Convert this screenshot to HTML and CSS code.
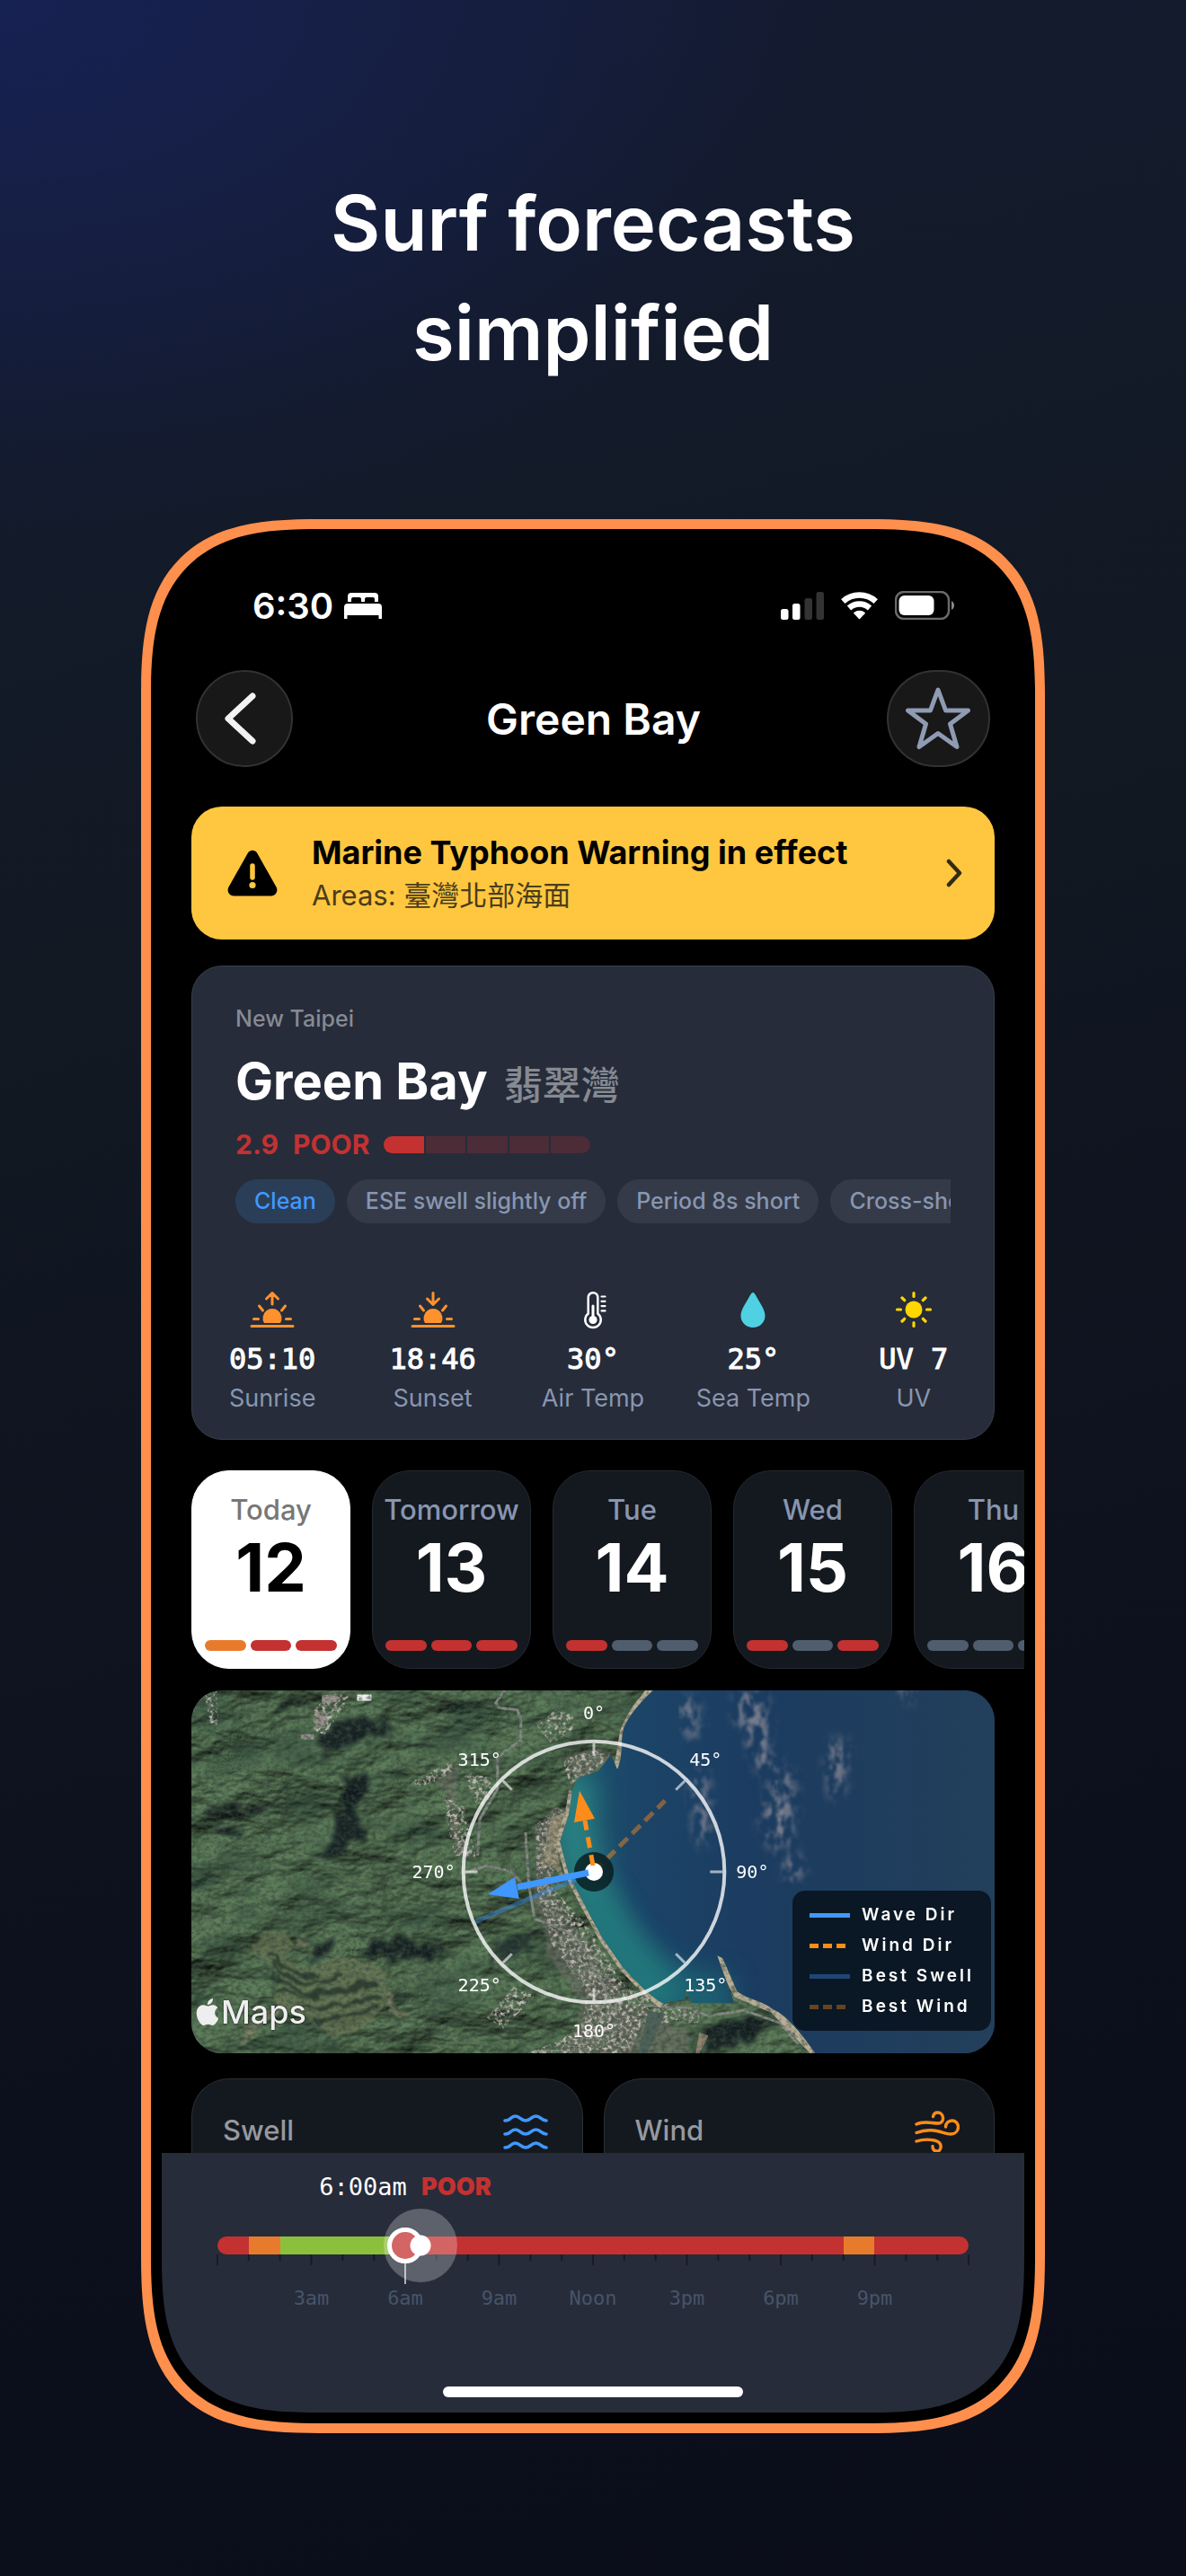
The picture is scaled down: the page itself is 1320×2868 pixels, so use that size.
FILE: index.html
```html
<!DOCTYPE html>
<html lang="en">
<head>
    <meta charset="UTF-8">
    <meta name="viewport" content="width=device-width, initial-scale=1.0">
    <title>Surf forecasts simplified</title>
    <link rel="stylesheet" href="styles.css">
</head>
<body>
    <h1 class="headline">Surf forecasts<br>simplified</h1>

    <div class="phone">
        <div class="screen">
            <!-- Status bar -->
            <div class="status-bar">
                <div class="status-left">
                    <span>6:30</span>
                    <svg width="42" height="29" viewBox="0 0 42 29" fill="#fff">
                        <path d="M4 10V4a4 4 0 0 1 4-4h26a4 4 0 0 1 4 4v6h-4V7a2 2 0 0 0-2-2h-7a2 2 0 0 0-2 2v3h-4V7a2 2 0 0 0-2-2h-7a2 2 0 0 0-2 2v3z"/>
                        <path d="M0 28V16a4 4 0 0 1 4-4h34a4 4 0 0 1 4 4v12a1.500 1.500 0 0 1-3.500 0v-3h-35v3A1.500 1.500 0 0 1 0 28z"/>
                    </svg>
                </div>
                <div class="status-right">
                    <svg width="48" height="31" viewBox="0 0 48 31" fill="#fff">
                        <rect x="0" y="19" width="8.500" height="12" rx="2.500"/>
                        <rect x="13" y="13" width="8.500" height="18" rx="2.500"/>
                        <rect x="26.500" y="7" width="8.500" height="24" rx="2.500" fill="#333"/>
                        <rect x="39.500" y="0" width="8.500" height="31" rx="2.500" fill="#333"/>
                    </svg>
                    <svg width="41" height="31" viewBox="0 0 41 31" fill="none" stroke="#fff" stroke-width="6.500">
                        <path d="M2.300 10.600A27.200 27.200 0 0 1 38.700 10.600M9 18A17.300 17.300 0 0 1 32 18"/>
                        <path d="M14.800 23.500a9 9 0 0 1 11.400 0l-5.700 6z" fill="#fff" stroke-width="1.500" stroke-linejoin="round"/>
                    </svg>
                    <svg width="66" height="32" viewBox="0 0 66 32">
                        <rect x="1" y="1" width="59" height="30" rx="9" fill="none" stroke="#6b6b6b" stroke-width="2.500"/>
                        <rect x="4.500" y="5" width="39" height="22" rx="6" fill="#fff"/>
                        <path d="M63 11c4 2 4 8 0 10z" fill="#8a8a8a"/>
                    </svg>
                </div>
            </div>

            <!-- Navigation -->
            <header class="nav">
                <button class="nav-button" aria-label="Back">
                    <svg width="46" height="62" viewBox="0 0 46 62" fill="none" stroke="#f2f2f2" stroke-width="7" stroke-linecap="round" stroke-linejoin="round">
                        <path d="M32 6L5 31l27 25"/>
                    </svg>
                </button>
                <h2 class="nav-title">Green Bay</h2>
                <button class="nav-button nav-button-wide" aria-label="Favourite">
                    <svg width="74" height="72" viewBox="0 0 74 72" fill="none" stroke="#8e9bb3" stroke-width="5" stroke-linejoin="round">
                        <path d="M37 4L45.500 27H70.500L50.500 42L58 67.500L37 52.500L16 67.500L23.500 42L3.500 27H28.500Z"/>
                    </svg>
                </button>
            </header>

            <main class="content">
                <a class="warning" href="#">
                    <svg width="56" height="52" viewBox="0 0 56 52">
                        <path d="M23 3.500c2.200-3.800 7.800-3.800 10 0l21.500 38c2.400 4.300-.4 10-5.500 10H7c-5.100 0-7.900-5.700-5.500-10z" fill="#000"/>
                        <path d="M28 18v13" stroke="#ffc73f" stroke-width="5.500" stroke-linecap="round"/>
                        <circle cx="28" cy="39.500" r="3.600" fill="#ffc73f"/>
                    </svg>
                    <span class="warning-text">
                        <strong>Marine Typhoon Warning in effect</strong>
                        <span>Areas: 臺灣北部海面</span>
                    </span>
                    <svg width="18" height="32" viewBox="0 0 18 32" fill="none" stroke="#332b14" stroke-width="4.500" stroke-linecap="round" stroke-linejoin="round">
                        <path d="M3 3l12 13L3 29"/>
                    </svg>
                </a>

                <section class="hero">
                    <div class="hero-top">
                        <p class="region">New Taipei</p>
                        <div class="spot">
                            <h3>Green Bay</h3>
                            <span>翡翠灣</span>
                        </div>
                        <div class="rating">
                            <span>2.9</span>
                            <span>POOR</span>
                            <div class="rating-bar">
                                <i class="on"></i><i></i><i></i><i></i><i></i>
                            </div>
                        </div>
                        <div class="chips">
                            <span class="chip chip-blue">Clean</span>
                            <span class="chip">ESE swell slightly off</span>
                            <span class="chip">Period 8s short</span>
                            <span class="chip">Cross-shore</span>
                        </div>
                    </div>
                    <div class="stats">
                        <div class="stat">
                            <svg width="50" height="48" viewBox="0 0 50 48" fill="none" stroke="#ff922e" stroke-width="3" stroke-linecap="round" stroke-linejoin="round">
                                <path d="M2 42.500h46M4.500 34.500h5M40.500 34.500h5M10.500 20l4 5M39.500 20l-4 5M25 18V6M18.500 12L25 5.500l6.500 6.500"/>
                                <path d="M16 39a10.500 10.500 0 1 1 18 0z" fill="#ff922e" stroke="none"/>
                            </svg>
                            <b>05:10</b>
                            <span>Sunrise</span>
                        </div>
                        <div class="stat">
                            <svg width="50" height="48" viewBox="0 0 50 48" fill="none" stroke="#ff922e" stroke-width="3" stroke-linecap="round" stroke-linejoin="round">
                                <path d="M2 42.500h46M4.500 34.500h5M40.500 34.500h5M10.500 20l4 5M39.500 20l-4 5M25 5.500V17.500M18.500 12l6.500 6.500 6.500-6.500"/>
                                <path d="M16 39a10.500 10.500 0 1 1 18 0z" fill="#ff922e" stroke="none"/>
                            </svg>
                            <b>18:46</b>
                            <span>Sunset</span>
                        </div>
                        <div class="stat">
                            <svg width="50" height="48" viewBox="0 0 50 48" fill="none" stroke="#fff" stroke-width="2.500" stroke-linecap="round">
                                <path d="M19.700 28.500V10.500a5.300 5.300 0 0 1 10.600 0v18a8.700 8.700 0 1 1-10.600 0z"/>
                                <path d="M25 20v14" stroke-width="3"/>
                                <circle cx="25" cy="35.500" r="4.600" fill="#fff" stroke="none"/>
                                <path d="M34.500 9.500h4M34.500 14.800h4M34.500 20.100h4M34.500 25.400h4" stroke-width="2.200"/>
                            </svg>
                            <b>30°</b>
                            <span>Air Temp</span>
                        </div>
                        <div class="stat">
                            <svg width="50" height="48" viewBox="0 0 50 48">
                                <path d="M25 5c1 0 2 1 3 3 5 9 10.500 16 10.500 23A13.500 13 0 0 1 25 44a13.500 13 0 0 1-13.500-13C11.500 24 17 17 22 8c1-2 2-3 3-3z" fill="#4fd0e3"/>
                            </svg>
                            <b>25°</b>
                            <span>Sea Temp</span>
                        </div>
                        <div class="stat">
                            <svg width="50" height="48" viewBox="0 0 50 48" fill="#ffd600" stroke="#ffd600" stroke-width="3.200" stroke-linecap="round">
                                <circle cx="25" cy="24" r="9.500" stroke="none"/>
                                <path d="M25 5.500v4M25 38.500v4M6.500 24h4M39.500 24h4M12 11l2.700 2.700M35.300 34.300L38 37M12 37l2.700-2.700M35.300 13.700L38 11"/>
                            </svg>
                            <b>UV 7</b>
                            <span>UV</span>
                        </div>
                    </div>
                </section>
            </main>

            <!-- Day picker -->
            <div class="days">
                <button class="day active">
                    <span class="day-name">Today</span>
                    <span class="day-number">12</span>
                    <span class="day-bars"><i class="fair"></i><i class="poor"></i><i class="poor"></i></span>
                </button>
                <button class="day">
                    <span class="day-name">Tomorrow</span>
                    <span class="day-number">13</span>
                    <span class="day-bars"><i class="poor"></i><i class="poor"></i><i class="poor"></i></span>
                </button>
                <button class="day">
                    <span class="day-name">Tue</span>
                    <span class="day-number">14</span>
                    <span class="day-bars"><i class="poor"></i><i></i><i></i></span>
                </button>
                <button class="day">
                    <span class="day-name">Wed</span>
                    <span class="day-number">15</span>
                    <span class="day-bars"><i class="poor"></i><i></i><i class="poor"></i></span>
                </button>
                <button class="day">
                    <span class="day-name">Thu</span>
                    <span class="day-number">16</span>
                    <span class="day-bars"><i></i><i></i><i></i></span>
                </button>
            </div>

            <div class="content">
                <!-- Satellite map with compass -->
                <div class="map">
                    <svg class="map-canvas" viewBox="0 0 892 404" preserveAspectRatio="xMidYMid slice">
                        <defs>
                            <linearGradient id="sea" x1="0" y1="0" x2="1" y2="0">
                                <stop offset="0" stop-color="#1d5f70"/>
                                <stop offset=".18" stop-color="#1c4568"/>
                                <stop offset=".45" stop-color="#1b3c60"/>
                                <stop offset="1" stop-color="#233f5b"/>
                            </linearGradient>
                            <filter id="grain" x="0" y="0" width="100%" height="100%">
                                <feTurbulence type="fractalNoise" baseFrequency=".18 .24" numOctaves="3" seed="4"/>
                                <feColorMatrix values="0 0 0 0 .04  0 0 0 0 .07  0 0 0 0 .05  1.800 0 0 0 -.74"/>
                            </filter>
                            <!-- lit noise gives the hills their relief -->
                            <filter id="relief" x="0" y="0" width="100%" height="100%" color-interpolation-filters="sRGB">
                                <feTurbulence type="fractalNoise" baseFrequency=".009 .016" numOctaves="5" seed="11"/>
                                <feColorMatrix values="0 0 0 0 0  0 0 0 0 0  0 0 0 0 0  1 0 0 0 0"/>
                                <feDiffuseLighting surfaceScale="18" diffuseConstant="1.150" lighting-color="#536f50">
                                    <feDistantLight azimuth="235" elevation="58"/>
                                </feDiffuseLighting>
                            </filter>
                            <filter id="hills" x="0" y="0" width="100%" height="100%">
                                <feTurbulence type="fractalNoise" baseFrequency=".012 .022" numOctaves="5" seed="11"/>
                                <feColorMatrix values="0 0 0 0 .01  0 0 0 0 .03  0 0 0 0 .025  3 0 0 0 -1.500"/>
                            </filter>
                            <filter id="town" x="0" y="0" width="100%" height="100%">
                                <feTurbulence type="fractalNoise" baseFrequency=".24" numOctaves="3" seed="7" result="n"/>
                                <feColorMatrix in="n" values="0 0 0 0 .55  0 0 0 0 .48  0 0 0 0 .45  4 0 0 0 -1.800"/>
                                <feComposite operator="in" in2="SourceGraphic"/>
                            </filter>
                            <filter id="rough" x="-10%" y="-10%" width="120%" height="120%">
                                <feTurbulence type="fractalNoise" baseFrequency=".06" numOctaves="3" seed="2" result="n"/>
                                <feDisplacementMap in="SourceGraphic" in2="n" scale="14" xChannelSelector="R" yChannelSelector="G"/>
                                <feGaussianBlur stdDeviation="1"/>
                            </filter>
                            <filter id="shade" x="-10%" y="-10%" width="120%" height="120%">
                                <feTurbulence type="fractalNoise" baseFrequency=".07" numOctaves="4" seed="9" result="n"/>
                                <feDisplacementMap in="SourceGraphic" in2="n" scale="30" xChannelSelector="R" yChannelSelector="G"/>
                                <feGaussianBlur stdDeviation="2"/>
                            </filter>
                            <filter id="soft" x="-30%" y="-30%" width="160%" height="160%">
                                <feGaussianBlur stdDeviation="14"/>
                            </filter>
                            <filter id="haze" x="0" y="0" width="100%" height="100%">
                                <feTurbulence type="fractalNoise" baseFrequency=".12 .07" numOctaves="4" seed="5" result="n"/>
                                <feGaussianBlur in="SourceGraphic" stdDeviation="7" result="s"/>
                                <feColorMatrix in="n" values="0 0 0 0 .2  0 0 0 0 .21  0 0 0 0 .27  4 0 0 0 -1.700"/>
                                <feComposite operator="in" in2="s"/>
                                <feGaussianBlur stdDeviation="1"/>
                            </filter>
                            <path id="shore" d="M0 0H513C499 13 486 28 480 42C476 56 480 72 473 88L466 72L452 90L429 98L423 112L419 138L409 168L419 205L436 238L456 275L479 308C492 322 506 338 523 348L549 344V335L556 348L603 348L584 295L590 298L606 335C620 345 634 345 646 355C662 362 676 380 693 404H0Z"/>
                            <clipPath id="land"><use href="#shore"/></clipPath>
                        </defs>

                        <rect x="400" width="492" height="404" fill="url(#sea)"/>
                        <path d="M425 95C425 170 425 240 530 350" fill="none" stroke="#2f8f88" stroke-width="44" opacity=".75" filter="url(#soft)"/>
                        <path d="M440 230C470 300 520 344 600 345" fill="none" stroke="#1b7479" stroke-width="56" opacity=".6" filter="url(#soft)"/>
                        <g filter="url(#haze)">
                            <path d="M606 0h30l6 50 8 40-18 4-14-34-14-30z"/>
                            <path d="M640 110l26-30 4 40-4 50-20 10-14-30z"/>
                            <path d="M706 60l20-6 2 34-8 34-12-6z"/>
                            <path d="M541 10h20l4 40-14 8z"/>
                            <path d="M656 188l20-6 4 24-18 10z"/>
                            <path d="M555 90l18 4 4 70-16 10z"/>
                            <path d="M780 -10h28l-10 26z"/>
                        </g>

                        <g clip-path="url(#land)">
                            <rect width="892" height="404" filter="url(#relief)"/>
                            <rect width="892" height="404" filter="url(#hills)" opacity=".4"/>
                            <g fill="#10181f" filter="url(#shade)" opacity=".85">
                                <path d="M150 44l16-16 22 4 20 2 24 10-24 8-34 10-20 6-18-8z"/>
                                <path d="M170 92l22 4-8 40 8 24-22 20-34 8 24-30z"/>
                                <path d="M20 132l30-8-4 14-24 4zM66 136l22-10-8 18zM20 150l34 4-12 8z"/>
                                <path d="M100 14l30-12-14 14-14 10zM286 22l30-14-14 20z"/>
                                <path d="M134 284l30-14-12 26-26 4zM176 290l50-16 50 12 20 8-56 6z"/>
                                <path d="M336 278l64-10-50 28-20 18z" opacity=".8"/>
                                <path d="M566 384l38-24 44 10-30 20-44 14z"/>
                            </g>
                            <!-- terraced fields -->
                            <path d="M66 282l14-14 26 4 10 14-14 14 34 10 28-14 40 6 14 16-4 36-24 24-30 8-30-20-36-14 4-36-14-14z" fill="#6b7755" opacity=".8" filter="url(#rough)"/>
                            <g fill="none" stroke="#2c3b2d" stroke-width="4" filter="url(#rough)">
                                <path d="M88 292c12 18 22 24 54 26M90 302c10 16 24 24 48 24l30-10M88 314c12 12 30 24 56 22l66-12M96 332c22 14 60 8 110-4M120 352c30 6 56-6 90-12M136 366c24 2 50-10 72-16"/>
                            </g>
                            <path d="M55 392c12-14 22-26 44-44M216 336l8 20 14 6M116 280l14 2" fill="none" stroke="#93876f" stroke-width="6" opacity=".6" filter="url(#rough)"/>
                            <!-- built up areas -->
                            <g fill="#75706a" opacity=".55" filter="url(#rough)">
                                <path d="M276 96l24-14-6 30 4 60 14 14-18-2-6-60z"/>
                                <path d="M414 74l40-10 12 10-30 30-8 4z"/>
                                <path d="M384 150l20-20 18 4-4 30-20 60 44 60 42 64 68 30v52H350l10-14 50-20 18-16 6-30-34-50-20-70z"/>
                            </g>
                            <g filter="url(#town)">
                                <path d="M240 104l50-26v14l-30 14zM278 120l24 6 14 60-24-2z"/>
                                <path d="M300 90l34 8-2 24-14 8z"/>
                                <path d="M384 40l20-18 20 6v16l-24 16z"/>
                                <path d="M412 76l42-10 12 6-32 30-14 2z"/>
                                <path d="M382 150l24-20 14 6-8 30-14 50 40 44 46 72 60 22 20 4v12H500l-20 54H350l12-16 50-20 22-20 6-30-40-56-16-60z"/>
                                <path d="M328 364l30-34 24 10-36 36z"/>
                                <path d="M136 20l22-16 20 2-30 44-12-6z"/>
                                <path d="M14 0h14l2 40-10-4z"/>
                            </g>
                            <path d="M184 5h16v7h-16z" fill="#eef0ee"/>
                            <path d="M145 6l18-2v10h-18zM138 24l14 2-4 16h-10zM122 49h14v6h-14z" fill="#99918b"/>
                            <g fill="none" stroke="#858981" stroke-width="3" stroke-linejoin="round">
                                <path d="M348 0l-10 14 4 6 20 2 4 12v22l-18 12-8 8v34l-20 34-2 40"/>
                                <path d="M371 158l4 60 6 36 30 12c20 8 28 24 34 40l22 40"/>
                                <path d="M304 203l24-8 26 6 18 20M500 350l54 4 20 8 40-6 40 14 20 24"/>
                            </g>
                            <path d="M508 356l-12 48h10l20-44z" fill="#4f6259"/>
                            <path d="M560 404l4-24 10 4-10 20z" fill="#93836f"/>
                            <path d="M400 140l20-4-2 28-12 20 10 30-16-20-12 4z" fill="#a39679" opacity=".7"/>
                            <path d="M513 -4C499 13 486 28 480 46L473 88M423 112L419 138L409 168L419 205L436 238L456 275L479 308C492 322 506 338 523 350M584 295L606 338L646 355L693 404" fill="none" stroke="#b9ad96" stroke-width="8" stroke-linejoin="round"/>
                            <rect width="892" height="404" filter="url(#grain)"/>
                        </g>

                        <!-- best directions -->
                        <path d="M447 202L316 257" stroke="#4098ff" stroke-width="5" opacity=".4"/>
                        <path d="M447 202L526 123" stroke="#ff8c1a" stroke-width="5" stroke-dasharray="13 7" opacity=".45"/>
                        <!-- dial -->
                        <circle cx="447" cy="202" r="145" fill="none" stroke="#fff" stroke-opacity=".78" stroke-width="4"/>
                        <path d="M447 59v14M447 331v14M304 202h14M576 202h14M346 101l10 10M538 293l10 10M346 303l10-10M538 111l10-10" stroke="#fff" stroke-opacity=".6" stroke-width="3"/>
                        <circle cx="447" cy="202" r="22" fill="#061417" fill-opacity=".75"/>
                        <circle cx="447" cy="202" r="10" fill="#fff"/>
                        <path d="M446 195L437 145" stroke="#ff8c1a" stroke-width="5" stroke-dasharray="12 8"/>
                        <path d="M431 112l17 31-23 4z" fill="#ff8c1a"/>
                        <path d="M441 203L362 219" stroke="#4098ff" stroke-width="7"/>
                        <path d="M329 227l30-19 5 24z" fill="#4098ff"/>
                        <g class="degrees">
                            <text x="447" y="32">0°</text>
                            <text x="571" y="84">45°</text>
                            <text x="623" y="209">90°</text>
                            <text x="571" y="335">135°</text>
                            <text x="447" y="386">180°</text>
                            <text x="320" y="335">225°</text>
                            <text x="269" y="209">270°</text>
                            <text x="320" y="84">315°</text>
                        </g>
                    </svg>
                    <div class="map-credit">
                        <svg width="30" height="32" viewBox="0 0 24 24" fill="#eee">
                            <path d="M12.152 6.896c-.948 0-2.415-1.078-3.960-1.040-2.040.027-3.910 1.183-4.961 3.014-2.117 3.675-.546 9.103 1.519 12.090 1.013 1.454 2.208 3.090 3.792 3.039 1.520-.065 2.090-.987 3.935-.987 1.831 0 2.350.987 3.960.948 1.637-.026 2.676-1.480 3.676-2.948 1.156-1.688 1.636-3.325 1.662-3.415-.039-.013-3.182-1.221-3.220-4.857-.026-3.040 2.480-4.494 2.597-4.559-1.429-2.090-3.623-2.324-4.390-2.376-2-.156-3.675 1.090-4.610 1.090zM15.530 3.830c.843-1.012 1.400-2.427 1.245-3.830-1.207.052-2.662.805-3.532 1.818-.780.896-1.454 2.338-1.273 3.714 1.338.104 2.715-.688 3.559-1.701"/>
                        </svg>
                        <span>Maps</span>
                    </div>
                    <ul class="legend">
                        <li><i class="line-wave"></i>Wave Dir</li>
                        <li><i class="line-wind"></i>Wind Dir</li>
                        <li><i class="line-wave faded"></i>Best Swell</li>
                        <li><i class="line-wind faded"></i>Best Wind</li>
                    </ul>
                </div>

                <div class="metrics">
                    <div class="metric">
                        <span>Swell</span>
                        <svg width="50" height="44" viewBox="0 0 50 44" fill="none" stroke="#4098ff" stroke-width="3.600" stroke-linecap="round">
                            <path d="M2 11c7 0 6-5 11.500-5S19 11 25 11s6-5 11.500-5S42 11 48 11M2 26c7 0 6-5 11.500-5S19 26 25 26s6-5 11.500-5S42 26 48 26M2 41c7 0 6-5 11.500-5S19 41 25 41s6-5 11.500-5S42 41 48 41"/>
                        </svg>
                    </div>
                    <div class="metric">
                        <span>Wind</span>
                        <svg width="50" height="46" viewBox="0 0 50 46" fill="none" stroke="#ff8c1a" stroke-width="3.400" stroke-linecap="round">
                            <path d="M2 15c8-4 17-1 24-1 8 0 7-12-.5-12-3 0-4.500 2-5 4.500"/>
                            <path d="M2 24.500c18-7 30 1.500 38 1.500C51 26 51 11 41.500 11c-4 0-7 3-7 7"/>
                            <path d="M2 34c9-3 15-2 20-1 10 2 8 12 3 12-3.500 0-5-2.500-5-5.500"/>
                        </svg>
                    </div>
                </div>
            </div>

            <!-- Time scrubber -->
            <footer class="scrubber">
                <label class="current-time" for="hour">6:00am <strong>POOR</strong></label>
                <div class="track">
                    <div class="track-colors">
                        <i class="poor" style="flex-grow: 1"></i>
                        <i class="fair" style="flex-grow: 1"></i>
                        <i class="good" style="flex-grow: 4"></i>
                        <i class="poor" style="flex-grow: 14"></i>
                        <i class="fair" style="flex-grow: 1"></i>
                        <i class="poor" style="flex-grow: 3"></i>
                    </div>
                    <input class="hour-slider" type="range" id="hour" min="0" max="24" value="6">
                    <span class="touch"></span>
                </div>
                <svg class="ticks" viewBox="0 0 24 12" preserveAspectRatio="none">
                    <path d="M1 0v7M2 0v7M4 0v7M5 0v7M7 0v7M8 0v7M10 0v7M11 0v7M13 0v7M14 0v7M16 0v7M17 0v7M19 0v7M20 0v7M22 0v7M23 0v7M0 0v12M3 0v12M6 0v12M9 0v12M12 0v12M15 0v12M18 0v12M21 0v12M24 0v12"/>
                    <path class="now" d="M6 9v24"/>
                </svg>
                <div class="hours">
                    <span>3am</span><span>6am</span><span>9am</span><span>Noon</span><span>3pm</span><span>6pm</span><span>9pm</span>
                </div>
                <div class="home-indicator"></div>
            </footer>
        </div>
    </div>
</body>
</html>
```

FILE: styles.css
```css
* {
    box-sizing: border-box;
}

body {
    font-family: Inter, "Noto Sans CJK TC", sans-serif;
    display: flex;
    flex-direction: column;
    align-items: center;
    min-height: 100vh;
    margin: 0;
    padding: 188px 32px 158px;
    color: #fff;
    background: radial-gradient(ellipse 75% 21% at 0 0, #172254, rgba(23, 34, 84, 0)), linear-gradient(165deg, #141b30, #121923 35%, #0c0f1c 75%, #0b0d1a);
}

h1, h2, h3, p, ul {
    margin: 0;
    padding: 0;
    font-weight: 600;
}

button {
    font-family: inherit;
    color: inherit;
    cursor: pointer;
}

svg {
    flex-shrink: 0;
    display: block;
}

.headline {
    font-size: 85px;
    line-height: 122px;
    text-align: center;
    margin-bottom: 146px;
}

.phone {
    width: 100%;
    max-width: 1006px;
    padding: 13px 12px 12px;
    border: 11px solid #ff8f4c;
    border-radius: 148px;
    background: #000;
}

.screen {
    display: flex;
    flex-direction: column;
    overflow: hidden;
    border-radius: 124px;
    background: #000;
}

/* smoother device corners where the browser can draw them */
@supports (corner-shape: squircle) {
    .phone {
        border-radius: 200px;
        corner-shape: superellipse(1.5);
    }

    .screen {
        border-radius: 176px;
        corner-shape: superellipse(1.5);
    }
}

.content {
    padding: 0 33px;
}

/* Status bar */
.status-bar {
    display: flex;
    justify-content: space-between;
    align-items: center;
    height: 36px;
    margin-top: 54px;
    padding: 0 78px 0 101px;
}

.status-left {
    display: flex;
    align-items: center;
    gap: 12px;
    font-size: 40px;
    font-weight: 600;
}

.status-right {
    display: flex;
    align-items: center;
    gap: 19px;
}

/* Navigation */
.nav {
    display: flex;
    justify-content: space-between;
    align-items: center;
    margin: 54px 38px 44px;
}

.nav-button {
    display: flex;
    justify-content: center;
    align-items: center;
    width: 108px;
    height: 108px;
    padding: 0;
    border: 2px solid #323232;
    border-radius: 54px;
    background: #181818;
}

.nav-button-wide {
    width: 115px;
}

.nav-title {
    padding-left: 8px;
    font-size: 48px;
}

/* Warning banner */
.warning {
    display: flex;
    align-items: center;
    height: 148px;
    padding: 0 36px 0 40px;
    border-radius: 34px;
    background: #ffc73f;
    color: #000;
    text-decoration: none;
}

.warning-text {
    flex: 1;
    display: flex;
    flex-direction: column;
    margin-left: 38px;
    padding-top: 4px;
    font-size: 31px;
    line-height: 50px;
    color: #4a3d1b;
}

.warning-text strong {
    font-size: 36px;
    line-height: 46px;
    font-weight: 700;
    color: #000;
}

/* Spot card */
.hero {
    margin-top: 29px;
    border: 1px solid #383e49;
    border-radius: 34px;
    background: #262c3a;
}

.hero-top {
    padding: 43px 48px 0;
}

.region {
    font-size: 25px;
    line-height: 30px;
    font-weight: 500;
    color: #868a92;
}

.spot {
    display: flex;
    align-items: baseline;
    gap: 18px;
    margin-top: 21px;
}

.spot h3 {
    font-size: 56px;
    line-height: 68px;
    font-weight: 700;
}

.spot span {
    font-size: 43px;
    line-height: 40px;
    font-weight: 500;
    color: #868a92;
}

.rating {
    display: flex;
    align-items: center;
    gap: 16px;
    margin-top: 18px;
    font-size: 30px;
    line-height: 36px;
    font-weight: 700;
    color: #c43131;
}

.rating-bar {
    display: flex;
    gap: 2px;
    width: 230px;
    height: 19px;
    overflow: hidden;
    border-radius: 10px;
}

.rating-bar i {
    flex: 1;
    background: #4b2c37;
}

.rating-bar .on {
    background: #c43131;
}

.chips {
    display: flex;
    gap: 13px;
    margin-top: 21px;
    overflow: hidden;
}

.chip {
    flex-shrink: 0;
    padding: 0 21px;
    border-radius: 25px;
    background: #343a48;
    color: #8896b0;
    font-size: 25px;
    line-height: 49px;
    font-weight: 500;
    white-space: nowrap;
}

.chip-blue {
    background: #2b3e58;
    color: #4098ff;
}

.stats {
    display: grid;
    grid-template-columns: repeat(5, 1fr);
    margin-top: 72px;
    padding-bottom: 29px;
}

.stat {
    display: flex;
    flex-direction: column;
    align-items: center;
}

.stat b {
    margin: 11px 0 8px;
    font-family: "DejaVu Sans Mono", monospace;
    font-size: 32px;
    line-height: 40px;
    font-weight: 400;
    -webkit-text-stroke: 1px #fff;
}

.stat span {
    font-size: 27px;
    line-height: 32px;
    color: #8896b0;
}

/* Days */
.days {
    display: flex;
    gap: 24px;
    margin: 34px 0 24px;
    padding-left: 33px;
    overflow: hidden;
}

.day {
    flex: 0 0 177px;
    display: flex;
    flex-direction: column;
    align-items: center;
    min-width: 0;
    padding: 24px 12px 19px;
    border: 1px solid #24292f;
    border-radius: 42px;
    background: #141920;
}

.day-name {
    font-size: 31px;
    line-height: 38px;
    font-weight: 500;
    color: #8896b0;
}

.day-number {
    margin: 5px 0 41px;
    font-size: 74px;
    line-height: 80px;
    font-weight: 700;
}

.day-bars {
    display: flex;
    gap: 5px;
    width: 100%;
    padding: 0 2px;
}

.day-bars i {
    flex: 1;
    height: 12px;
    border-radius: 6px;
    background: #505d6e;
}

.active {
    background: #fff;
    border-color: #fff;
    color: #000;
}

.active .day-name {
    color: #777;
}

.day-bars .poor, .track-colors .poor {
    background: #c43131;
}

.day-bars .fair, .track-colors .fair {
    background: #e87b2b;
}

.track-colors .good {
    background: #8bc03c;
}

/* Map */
.map {
    position: relative;
    height: 404px;
    overflow: hidden;
    border-radius: 34px;
    background: #1d4065;
}

.map-canvas {
    width: 100%;
    height: 100%;
}

.degrees {
    font-family: "DejaVu Sans Mono", monospace;
    font-size: 20px;
    fill: #fff;
    text-anchor: middle;
}

.map-credit {
    position: absolute;
    left: 3px;
    bottom: 24px;
    display: flex;
    align-items: center;
    color: #eee;
    font-size: 36px;
    line-height: 44px;
    font-weight: 500;
    text-shadow: 0 0 2px #000;
}

.legend {
    position: absolute;
    right: 4px;
    bottom: 25px;
    padding: 10px 19px;
    border-radius: 14px;
    background: rgba(8, 18, 28, .88);
    list-style: none;
}

.legend li {
    display: flex;
    align-items: center;
    gap: 13px;
    font-size: 19px;
    line-height: 34px;
    font-weight: 600;
    letter-spacing: 3px;
}

.legend i {
    width: 45px;
    height: 5px;
}

.line-wave {
    background: #4098ff;
}

.line-wind {
    background: repeating-linear-gradient(90deg, #ff8c1a 0 10px, transparent 10px 15px);
}

.faded {
    opacity: .38;
}

/* Swell and wind cards */
.metrics {
    display: grid;
    grid-template-columns: 1fr 1fr;
    gap: 23px;
    margin-top: 28px;
}

.metric {
    display: flex;
    justify-content: space-between;
    align-items: flex-start;
    height: 83px;
    padding: 35px 38px 0 34px;
    border: 1px solid #2b3036;
    border-bottom: none;
    border-radius: 42px 42px 0 0;
    background: #141920;
    color: #96999f;
    font-size: 31px;
    line-height: 44px;
    font-weight: 500;
}

/* Time scrubber */
.scrubber {
    padding: 21px 62px 17px;
    background: #262c3a;
}

.current-time {
    display: block;
    width: 50%;
    font-family: "DejaVu Sans Mono", monospace;
    font-size: 27px;
    line-height: 34px;
    text-align: center;
    white-space: nowrap;
}

.current-time strong {
    font-family: Inter, sans-serif;
    font-weight: 900;
    color: #c43131;
}

.track {
    position: relative;
    margin-top: 38px;
}

.track-colors {
    display: flex;
    height: 20px;
    overflow: hidden;
    border-radius: 10px;
}

.track-colors i {
    flex-basis: 0;
}

/* runs half a thumb past both ends, so the thumb sits on the hour */
.hour-slider {
    position: absolute;
    top: -10px;
    left: -20px;
    width: calc(100% + 40px);
    height: 40px;
    margin: 0;
    appearance: none;
    background: none;
}

.hour-slider::-webkit-slider-thumb {
    appearance: none;
    width: 40px;
    height: 40px;
    border: 5px solid #fff;
    border-radius: 50%;
    background: #c43131;
}

.touch {
    position: absolute;
    top: -31px;
    left: 27%;
    width: 82px;
    height: 82px;
    margin-left: -41px;
    border-radius: 50%;
    background: radial-gradient(circle, #fff 11px, rgba(255, 255, 255, .25) 12px);
    pointer-events: none;
}

.ticks {
    width: 100%;
    height: 12px;
    overflow: visible;
}

.ticks path {
    stroke: #171c24;
    stroke-width: 2px;
    vector-effect: non-scaling-stroke;
}

.ticks .now {
    stroke: #aeb1b7;
}

.hours {
    display: grid;
    grid-template-columns: repeat(7, 1fr);
    margin-top: 23px;
    padding: 0 6.25%;
    font-family: "DejaVu Sans Mono", monospace;
    font-size: 22px;
    line-height: 28px;
    text-align: center;
    color: #475467;
}

.home-indicator {
    width: 40%;
    height: 12px;
    margin: 84px auto 0;
    border-radius: 6px;
    background: #fff;
}
```
